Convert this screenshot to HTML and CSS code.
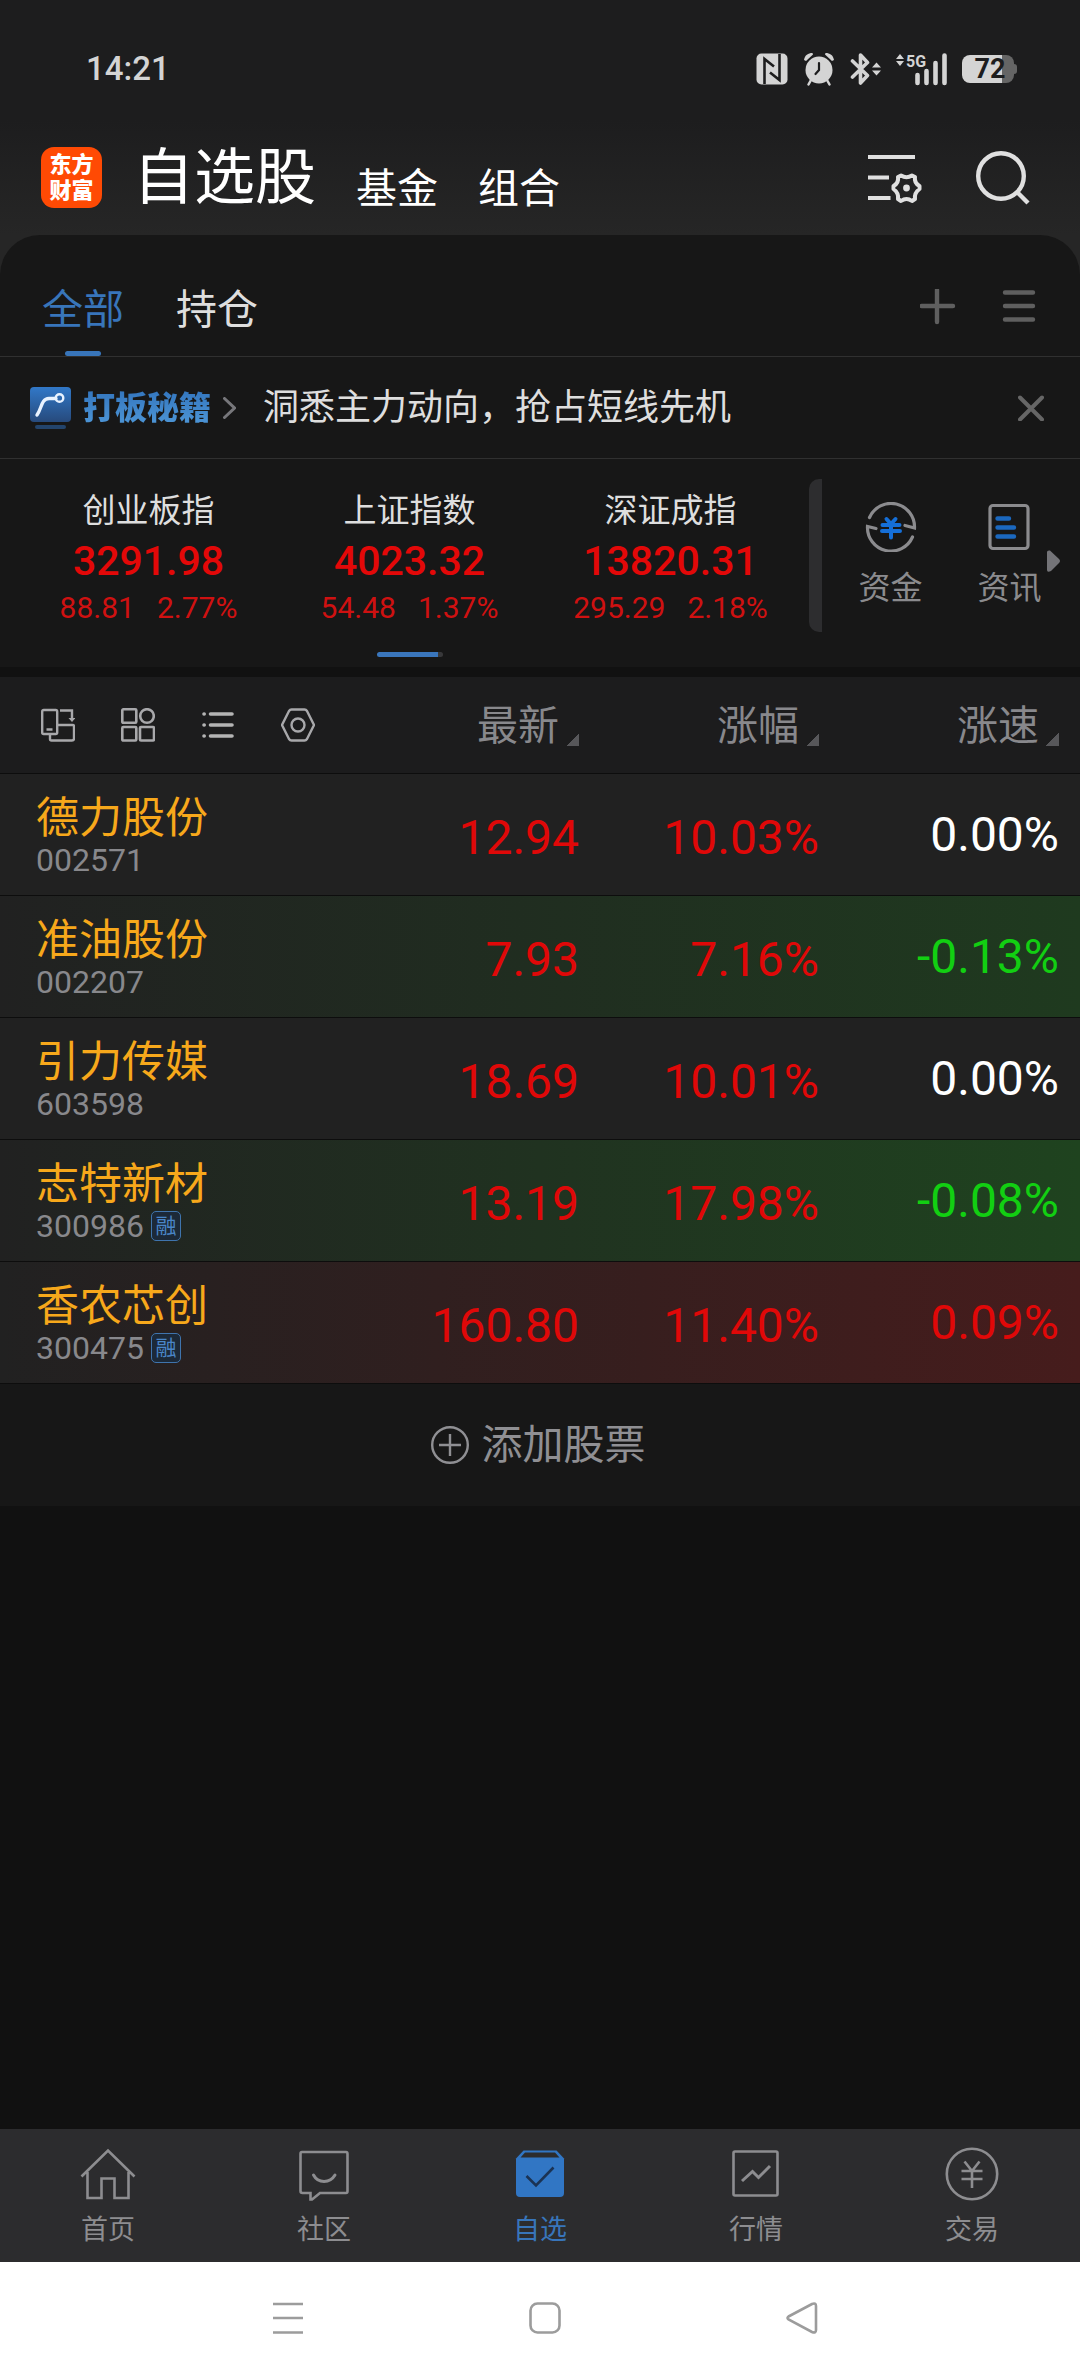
FILE: index.html
```html
<!DOCTYPE html>
<html lang="zh-CN">
  <head>
    <meta charset="UTF-8" />
    <meta name="viewport" content="width=device-width, initial-scale=1.0" />
    <title>自选股</title>
    <link rel="stylesheet" href="styles.css">
  </head>
  <body>
    <div class="top">
      <div class="status-bar">
        <span class="time">14:21</span>
        <div class="status-icons">
          <svg width="32" height="32" viewBox="0 0 32 32">
            <rect x="0.500" y="0.500" width="31" height="31" rx="5" fill="#d4d4d4" />
            <path d="M8.500 31V6L18 13.500M23.500 1V27L14 19.500" fill="none" stroke="#1d1d1e" stroke-width="2.600" />
          </svg>
          <svg class="alarm" width="32" height="34" viewBox="0 0 32 34">
            <circle cx="16" cy="18" r="13.500" fill="#d4d4d4" />
            <path d="M1 8C2 3 5 1 9.500 1L10 2.500 3 9ZM31 8C30 3 27 1 22.500 1L22 2.500 29 9Z" fill="#d4d4d4" />
            <path d="M8 28L5.500 32.500M24 28L26.500 32.500" stroke="#d4d4d4" stroke-width="2.500" stroke-linecap="round" />
            <path d="M16 11V18L12.500 22" fill="none" stroke="#1d1d1e" stroke-width="2.200" stroke-linecap="round" />
          </svg>
          <svg width="32" height="34" viewBox="0 0 32 34">
            <path d="M2.500 9L17.500 23.500 10.500 31V3L17.500 10.500 2.500 25" fill="none" stroke="#d4d4d4" stroke-width="3.600" stroke-linejoin="round" stroke-linecap="round" />
            <path d="M22 15.500L26.500 10.500 31 15.500ZM22 18.500L26.500 23.500 31 18.500Z" fill="#d4d4d4" />
          </svg>
          <svg width="54" height="34" viewBox="0 0 54 34">
            <path d="M1 7L5 2 9 7ZM1 9L5 14 9 9Z" fill="#d4d4d4" />
            <text x="11" y="15" class="signal-text">5G</text>
            <path d="M22.500 23V31M31.500 19V31M40.500 11V31M49.500 3.500V31" stroke="#d4d4d4" stroke-width="4.600" stroke-linecap="round" />
          </svg>
          <span class="battery">72</span>
        </div>
      </div>

      <header class="header">
        <div class="logo">东方<br>财富</div>
        <nav class="sections">
          <a class="section-title" href="#">自选股</a>
          <a class="section-link" href="#">基金</a>
          <a class="section-link" href="#">组合</a>
        </nav>
        <div class="header-actions">
          <button class="icon-btn" aria-label="列表设置">
            <svg width="54" height="54" viewBox="0 0 54 54" fill="none" stroke="#e0e0e0" stroke-width="4">
              <path d="M0 6H47M0 26.500H21M0 47H22.500" />
              <path d="M33 24.500Q38.500 28 44 24.500L47 26Q46 32 51.500 35V38Q46 42 47 48L44 50Q38.500 46 33 50L30 48Q31 42 25.500 38V35Q31 32 30 26Z" stroke-width="4" stroke-linejoin="round" />
              <circle cx="38.500" cy="37" r="3.400" fill="#e0e0e0" stroke="none" />
            </svg>
          </button>
          <button class="icon-btn" aria-label="搜索">
            <svg width="54" height="54" viewBox="0 0 54 54" fill="none" stroke="#e0e0e0" stroke-width="4.400">
              <circle cx="25" cy="25" r="22.800" />
              <path d="M41 41L52 52" />
            </svg>
          </button>
        </div>
      </header>
    </div>

    <main class="card">
      <div class="tabs">
        <button class="tab active">全部</button>
        <button class="tab">持仓</button>
        <div class="tab-actions">
          <button class="icon-btn" aria-label="添加分组">
            <svg width="36" height="36" viewBox="0 0 36 36">
              <path d="M17 1V33M1.500 17H33" stroke="#5f5f5f" stroke-width="4.400" stroke-linecap="round" />
            </svg>
          </button>
          <button class="icon-btn" aria-label="分组列表">
            <svg width="36" height="36" viewBox="0 0 36 36">
              <path d="M3 3.500H31M3 17H31M3 30.500H31" stroke="#5f5f5f" stroke-width="4.400" stroke-linecap="round" />
            </svg>
          </button>
        </div>
      </div>

      <div class="promo">
        <svg width="41" height="42" viewBox="0 0 41 42">
          <defs>
            <linearGradient id="promo-bg" x1="0" y1="0" x2="0" y2="1">
              <stop offset="0" stop-color="#3178c8" />
              <stop offset="1" stop-color="#274a7c" />
            </linearGradient>
          </defs>
          <rect width="41" height="35" rx="4" fill="url(#promo-bg)" />
          <rect x="5" y="38" width="31" height="4" rx="2" fill="#23446c" />
          <path d="M7 28C12 21 11 12 19 11.500H26" fill="none" stroke="#e8f2ff" stroke-width="3.400" stroke-linecap="round" />
          <circle cx="29.500" cy="11" r="3.800" fill="none" stroke="#e8f2ff" stroke-width="2.400" />
        </svg>
        <a class="promo-name" href="#">打板秘籍</a>
        <svg class="promo-arrow" width="13" height="22" viewBox="0 0 13 22">
          <path d="M1.500 1.500L11.500 11 1.500 20.500" fill="none" stroke="#77777b" stroke-width="3" stroke-linecap="round" />
        </svg>
        <span class="promo-text">洞悉主力动向，抢占短线先机</span>
        <button class="icon-btn promo-close" aria-label="关闭">
          <svg width="26" height="26" viewBox="0 0 26 26">
            <path d="M2 2.500L24 24.500M24 2.500L2 24.500" stroke="#666" stroke-width="4" stroke-linecap="round" />
          </svg>
        </button>
      </div>

      <section class="market">
        <div class="indices">
          <div class="index">
            <div class="index-name">创业板指</div>
            <div class="index-value">3291.98</div>
            <div class="index-change"><span>88.81</span><span>2.77%</span></div>
          </div>
          <div class="index">
            <div class="index-name">上证指数</div>
            <div class="index-value">4023.32</div>
            <div class="index-change"><span>54.48</span><span>1.37%</span></div>
          </div>
          <div class="index">
            <div class="index-name">深证成指</div>
            <div class="index-value">13820.31</div>
            <div class="index-change"><span>295.29</span><span>2.18%</span></div>
          </div>
          <div class="pager"></div>
        </div>
        <div class="divider"></div>
        <div class="shortcuts">
          <a class="shortcut" href="#">
            <svg width="52" height="50" viewBox="0 0 52 50" fill="none" stroke-linecap="round">
              <path d="M4.500 15.500A23.500 23.500 0 0 1 49.500 26L40 23.500M47.500 35A23.500 23.500 0 0 1 2.500 24.500L11 26.500" stroke="#8b8b8e" stroke-width="3.200" />
              <path d="M21.500 17L26 22 30.500 17M17.500 23H34.500M17 29H35M26 23V35.500" stroke="#156fd8" stroke-width="4" />
            </svg>
            资金
          </a>
          <a class="shortcut" href="#">
            <svg width="52" height="50" viewBox="0 0 52 50" fill="none" stroke-linecap="round">
              <rect x="6" y="3.500" width="38" height="43" rx="3" stroke="#8b8b8e" stroke-width="3.200" />
              <path d="M13.500 16.500H25M13.500 25.500H30M13.500 34.500H30" stroke="#1b68bf" stroke-width="4.400" />
            </svg>
            资讯
          </a>
          <svg class="more-arrow" width="13" height="22" viewBox="0 0 13 22">
            <path d="M0 2Q0 0 3 0.500L12 9Q14 11 12 13L4 21Q0 23 0 20Z" fill="#747478" />
          </svg>
        </div>
      </section>

      <table class="stocks">
        <thead>
          <tr>
            <th class="col-name">
              <div class="toolbar">
                <button class="icon-btn" aria-label="横屏">
                  <svg width="34" height="34" viewBox="0 0 34 34" fill="none" stroke="#a8a8ab" stroke-width="2.400">
                    <rect x="1.200" y="2" width="15" height="24" rx="1.500" />
                    <path d="M5.500 21.500H11.500M19 2.500H31V11.500M9 26.500V31Q9 32.500 10.500 32.500H31Q33 32.500 33 30.500V18Q33 17 31.500 17H16.500" />
                    <path d="M27.500 10H34.500L31 14Z" fill="#a8a8ab" stroke="none" />
                  </svg>
                </button>
                <button class="icon-btn" aria-label="宫格">
                  <svg width="34" height="34" viewBox="0 0 34 34" fill="none" stroke="#a8a8ab" stroke-width="2.600">
                    <rect x="1.300" y="1.300" width="14" height="13.500" rx="1" />
                    <circle cx="26" cy="8" r="6.800" />
                    <rect x="1.300" y="19" width="14" height="13.500" rx="1" />
                    <rect x="19" y="19" width="14" height="13.500" rx="1" />
                  </svg>
                </button>
                <button class="icon-btn" aria-label="列表">
                  <svg width="34" height="34" viewBox="0 0 34 34" stroke="#b4b4b4" stroke-width="3.600" stroke-linecap="round">
                    <path d="M9.500 6H31M9.500 17H31M9.500 28H31M3 6H3.200M3 17H3.200M3 28H3.200" />
                  </svg>
                </button>
                <button class="icon-btn" aria-label="设置">
                  <svg width="34" height="34" viewBox="0 0 34 34" fill="none" stroke="#a8a8ab" stroke-width="2.400" stroke-linejoin="round">
                    <path d="M10.500 1.500H23.500Q25 1.500 26 3L33 17 26 31Q25 32.500 23.500 32.500H10.500Q9 32.500 8 31L1 17 8 3Q9 1.500 10.500 1.500Z" />
                    <circle cx="17" cy="17" r="6.500" />
                  </svg>
                </button>
              </div>
            </th>
            <th class="col-price"><button class="sort">最新</button></th>
            <th class="col-price"><button class="sort">涨幅</button></th>
            <th class="col-speed"><button class="sort">涨速</button></th>
          </tr>
        </thead>
        <tbody>
          <tr>
            <td class="col-name">
              <div class="stock-name">德力股份</div>
              <div class="stock-code">002571</div>
            </td>
            <td class="col-price up">12.94</td>
            <td class="col-price up">10.03%</td>
            <td class="col-speed">0.00%</td>
          </tr>
          <tr class="flash-green">
            <td class="col-name">
              <div class="stock-name">准油股份</div>
              <div class="stock-code">002207</div>
            </td>
            <td class="col-price up">7.93</td>
            <td class="col-price up">7.16%</td>
            <td class="col-speed down">-0.13%</td>
          </tr>
          <tr>
            <td class="col-name">
              <div class="stock-name">引力传媒</div>
              <div class="stock-code">603598</div>
            </td>
            <td class="col-price up">18.69</td>
            <td class="col-price up">10.01%</td>
            <td class="col-speed">0.00%</td>
          </tr>
          <tr class="flash-green strong">
            <td class="col-name">
              <div class="stock-name">志特新材</div>
              <div class="stock-code">300986<span class="tag">融</span></div>
            </td>
            <td class="col-price up">13.19</td>
            <td class="col-price up">17.98%</td>
            <td class="col-speed down">-0.08%</td>
          </tr>
          <tr class="flash-red">
            <td class="col-name">
              <div class="stock-name">香农芯创</div>
              <div class="stock-code">300475<span class="tag">融</span></div>
            </td>
            <td class="col-price up">160.80</td>
            <td class="col-price up">11.40%</td>
            <td class="col-speed up">0.09%</td>
          </tr>
        </tbody>
      </table>

      <button class="add-stock">
        <svg width="38" height="38" viewBox="0 0 38 38" fill="none" stroke="#8f8f93" stroke-width="2.400">
          <circle cx="19" cy="19" r="17.800" />
          <path d="M19 8V30M8 19H30" />
        </svg>
        添加股票
      </button>
    </main>

    <nav class="bottom-nav">
      <a class="nav-item" href="#">
        <svg width="56" height="56" viewBox="0 0 56 56">
          <path d="M1.500 30.500L28 4.500 54.500 30.500M7.500 26V52H21.500V32.500H34.500V52H48.500V26" />
        </svg>
        首页
      </a>
      <a class="nav-item" href="#">
        <svg width="56" height="56" viewBox="0 0 56 56">
          <path d="M6 6H50Q51.500 6 51.500 8V45Q51.500 47 50 47H24L16 53.500H14.500V47H6.500Q4.500 47 4.500 45V8Q4.500 6 6 6Z" />
          <path d="M17.500 29C22 37.500 34 37.500 39 29" stroke-width="3" stroke-linecap="round" />
        </svg>
        社区
      </a>
      <a class="nav-item active" href="#">
        <svg width="56" height="56" viewBox="0 0 56 56">
          <path d="M4 12.500L11.500 4.500H44.500L52 12.500V47Q52 51 48 51H8Q4 51 4 47Z" fill="#3176c4" stroke="none" />
          <path d="M8.500 11.500L13 6.500H43L47.500 11.500Z" fill="#2c2c2e" stroke="none" />
          <path d="M14.500 30L24 39.500 41.500 21.500" stroke="#1b3354" stroke-width="2.600" />
        </svg>
        自选
      </a>
      <a class="nav-item" href="#">
        <svg width="56" height="56" viewBox="0 0 56 56">
          <rect x="5.500" y="5.500" width="44" height="44" rx="1.500" />
          <path d="M14 35L24.500 25.500 30.500 31.500 42 20" stroke-width="3" />
        </svg>
        行情
      </a>
      <a class="nav-item" href="#">
        <svg width="56" height="56" viewBox="0 0 56 56">
          <circle cx="28" cy="28" r="25.200" />
          <path d="M20.500 15.500L28 25 35.500 15.500M17.500 25H38.500M17.500 33H38.500M28 25V42" />
        </svg>
        交易
      </a>
    </nav>

    <div class="system-bar">
      <button class="icon-btn" aria-label="最近任务">
        <svg width="32" height="32" viewBox="0 0 32 32">
          <path d="M1 2H31M1 16H31M1 30.500H31" />
        </svg>
      </button>
      <button class="icon-btn" aria-label="主屏幕">
        <svg width="32" height="32" viewBox="0 0 32 32">
          <rect x="1.500" y="1.500" width="29" height="29" rx="7" />
        </svg>
      </button>
      <button class="icon-btn" aria-label="返回">
        <svg width="32" height="32" viewBox="0 0 32 32">
          <path d="M2.500 14.500L26 2Q30 0.500 30 4V28Q30 31.500 26 30L2.500 17.500Q0.500 16 2.500 14.500Z" />
        </svg>
      </button>
    </div>
  </body>
</html>
```

FILE: styles.css
```css
* {
  box-sizing: border-box;
}
body {
  margin: 0;
  min-height: 100vh;
  display: flex;
  flex-direction: column;
  background: #111;
  color: #dedede;
  font-family: Roboto, "Noto Sans CJK SC", sans-serif;
}
a {
  color: inherit;
  text-decoration: none;
}
button {
  padding: 0;
  border: none;
  background: none;
  color: inherit;
  font: inherit;
  cursor: pointer;
}
svg {
  display: block;
  flex: none;
}
.icon-btn {
  display: block;
  flex: none;
}

/* status bar + header */
.top {
  /* runs on behind the rounded corners of the card */
  padding-bottom: 44px;
  margin-bottom: -44px;
  background: linear-gradient(#1d1d1e 120px, #262626 235px);
}
.status-bar {
  display: flex;
  align-items: center;
  justify-content: space-between;
  height: 120px;
  padding: 18px 63px 0 86px;
}
.time {
  color: #d4d4d4;
  font-size: 33px;
  font-weight: 500;
  line-height: 40px;
}
.status-icons {
  display: flex;
  align-items: center;
  gap: 13px;
}
.alarm {
  margin: 0 2px;
}
.signal-text {
  fill: #d4d4d4;
  font-size: 16px;
  font-weight: 700;
}
.battery {
  position: relative;
  width: 52px;
  height: 28px;
  padding-left: 4px;
  margin-right: 3px;
  border-radius: 8px;
  background: linear-gradient(to right, #d4d4d4 40px, #656565 40px);
  color: #1d1d1e;
  font-size: 27px;
  font-weight: 700;
  line-height: 29px;
  text-align: center;
}
.battery::after {
  content: "";
  position: absolute;
  top: 9px;
  right: -3px;
  width: 3px;
  height: 10px;
  border-radius: 0 3px 3px 0;
  background: #656565;
}
.header {
  display: flex;
  align-items: center;
  height: 115px;
  padding: 0 50px 0 41px;
}
.logo {
  width: 61px;
  height: 61px;
  padding-top: 5px;
  border-radius: 13px;
  background: #ff4a04;
  color: #fff;
  font-size: 22px;
  font-weight: 900;
  line-height: 26px;
  text-align: center;
}
.sections {
  display: flex;
  align-items: flex-end;
  gap: 40px;
  margin-left: 31px;
  color: #fff;
}
.section-title {
  font-size: 61px;
  line-height: 62px;
}
.section-link {
  font-size: 41px;
  line-height: 40px;
}
.header-actions {
  display: flex;
  gap: 54px;
  margin-left: auto;
}

/* group tabs */
.card {
  flex: 1;
}
.tabs {
  display: flex;
  gap: 52px;
  height: 122px;
  padding: 0 42px;
  border-bottom: 1px solid #303030;
  border-radius: 40px 40px 0 0;
  background: #171717;
}
.tab {
  position: relative;
  padding-top: 20px;
  font-size: 41px;
}
.tab.active {
  color: #3875ba;
}
.tab.active::after {
  content: "";
  position: absolute;
  bottom: 0;
  left: 50%;
  width: 36px;
  height: 5px;
  margin-left: -18px;
  border-radius: 3px;
  background: #3875ba;
}
.tab-actions {
  display: flex;
  align-items: center;
  gap: 46px;
  margin-left: auto;
  padding-top: 22px;
}

/* promo line */
.promo {
  display: flex;
  align-items: center;
  height: 102px;
  padding: 0 36px 0 30px;
  border-bottom: 1px solid #303030;
  background: #171717;
}
.promo-name {
  margin-left: 12px;
  background: linear-gradient(#3274bd, #4f98d8);
  background-clip: text;
  color: transparent;
  font-size: 32px;
  font-weight: 900;
  line-height: 40px;
}
.promo-arrow {
  margin-left: 12px;
}
.promo-text {
  margin-left: 27px;
  font-size: 36px;
  line-height: 40px;
}
.promo-close {
  margin-left: auto;
}

/* market indices */
.market {
  display: flex;
  height: 208px;
  background: #171717;
}
.indices {
  flex: 1;
  display: grid;
  grid-template-columns: repeat(3, 1fr);
  align-content: start;
  padding: 32px 8px 0 18px;
  text-align: center;
}
.index-name {
  font-size: 33px;
  line-height: 40px;
}
.index-value {
  color: #e30808;
  font-size: 41px;
  font-weight: 500;
  line-height: 60px;
}
.index-change {
  display: flex;
  justify-content: center;
  gap: 22px;
  color: #cf1111;
  font-size: 30px;
  line-height: 34px;
}
.pager {
  grid-column: 1 / -1;
  justify-self: center;
  width: 66px;
  height: 5px;
  margin-top: 27px;
  border-radius: 3px;
  background: linear-gradient(to right, #3a76bc 61px, #38383a 61px);
}
.divider {
  width: 13px;
  height: 153px;
  margin-top: 20px;
  border-radius: 10px 0 0 10px;
  background: #2d2d2f;
}
.shortcuts {
  position: relative;
  display: flex;
  padding: 43px 11px 0 9px;
}
.shortcut {
  display: flex;
  flex-direction: column;
  align-items: center;
  gap: 16px;
  width: 119px;
  color: #8b8b8e;
  font-size: 32px;
  line-height: 40px;
}
.more-arrow {
  position: absolute;
  top: 91px;
  right: 20px;
}

/* stock table */
.stocks {
  width: 100%;
  margin-top: 10px;
  border-spacing: 0;
  table-layout: fixed;
  background: #212121;
}
.stocks th {
  height: 97px;
  padding: 0;
  border-bottom: 1px solid #0d0d0d;
  background: #1c1c1d;
  color: #88888c;
  font-weight: 400;
  text-align: right;
}
.stocks td {
  height: 122px;
  padding: 0;
  border-bottom: 1px solid #0d0d0d;
  font-size: 48px;
  line-height: 56px;
  text-align: right;
}
.stocks .col-price {
  width: 240px;
}
.stocks td.col-price {
  padding-top: 6px;
}
.stocks .col-speed {
  width: 261px;
  padding-right: 21px;
}
.stocks td.col-speed {
  color: #fff;
}
.stocks td.col-name {
  padding-left: 36px;
  text-align: left;
}
.toolbar {
  display: flex;
  gap: 46px;
  padding-left: 41px;
}
.sort {
  padding-top: 2px;
  font-size: 41px;
  line-height: 40px;
}
.sort::after {
  content: "";
  display: inline-block;
  width: 13px;
  height: 13px;
  margin-left: 7px;
  vertical-align: -6px;
  background: linear-gradient(135deg, transparent 50%, #57575a 50%);
}
.stock-name {
  color: #f7a81b;
  font-size: 43px;
  line-height: 50px;
}
.stock-code {
  display: flex;
  align-items: center;
  gap: 7px;
  color: #88888c;
  font-size: 32px;
  line-height: 34px;
}
.tag {
  width: 30px;
  height: 30px;
  border: 1px solid #3f74ad;
  border-radius: 5px;
  background: #1c2938;
  color: #4a86c8;
  font-size: 21px;
  line-height: 29px;
  text-align: center;
}
.stocks td.up {
  color: #e00808;
}
.stocks td.down {
  color: #12cf12;
}
.flash-green {
  background: linear-gradient(to right, #212121, #1f3a1f);
}
.flash-green.strong {
  background: linear-gradient(to right, #212121, #1f431f);
}
.flash-red {
  background: linear-gradient(to right, #212121, #461c1c);
}
.add-stock {
  display: flex;
  align-items: center;
  justify-content: center;
  gap: 13px;
  width: 100%;
  height: 122px;
  padding-right: 4px;
  background: #171717;
  color: #8f8f93;
  font-size: 41px;
  line-height: 40px;
}

/* bottom navigation */
.bottom-nav {
  display: flex;
  height: 133px;
  padding-top: 17px;
  background: #2c2c2e;
}
.nav-item {
  flex: 1;
  display: flex;
  flex-direction: column;
  align-items: center;
  gap: 10px;
  color: #8d8d90;
  font-size: 27px;
  line-height: 36px;
}
.nav-item svg {
  fill: none;
  stroke: #8d8d90;
  stroke-width: 2.6;
}
.nav-item.active {
  color: #3875ba;
}

.system-bar {
  display: flex;
  align-items: center;
  justify-content: center;
  gap: 225px;
  height: 112px;
  padding-left: 9px;
  background: #fff;
}
.system-bar svg {
  fill: none;
  stroke: #9c9c9c;
  stroke-width: 2.6;
}
```
